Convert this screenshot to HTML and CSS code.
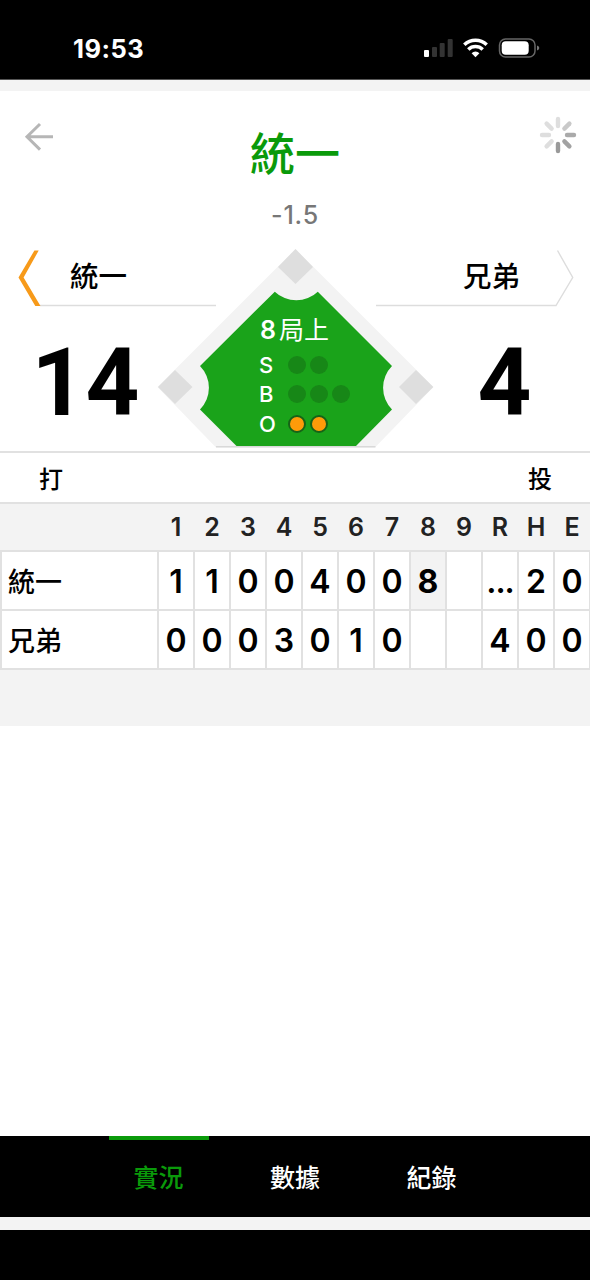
FILE: index.html
```html
<!DOCTYPE html>
<html lang="zh-Hant">
<head>
<meta charset="utf-8">
<title>統一 - 兄弟</title>
<link rel="stylesheet" href="styles.css">
</head>
<body>
<div class="app">
  <header class="status">
    <span class="time">19:53</span>
    <svg class="status-icons" width="118" height="24" viewBox="0 0 118 24">
      <rect x="1" y="14" width="5" height="7" rx="1" fill="#fff"/>
      <g fill="#333"><rect x="9" y="11" width="5" height="10" rx="1"/><rect x="16.7" y="7" width="5" height="14" rx="1"/><rect x="24.7" y="3" width="5" height="18" rx="1"/></g>
      <g fill="none" stroke="#fff" stroke-width="3.5"><path d="M41.3 8.800a16.200 16.200 0 0 1 22.400 0"/><path d="M45.300 13.500a10.300 10.300 0 0 1 14.400 0"/></g>
      <path d="M48.600 17.200a5.500 5.500 0 0 1 7.800 0L52.500 21.200z" fill="#fff"/>
      <rect x="76.500" y="3" width="35.500" height="18" rx="6" fill="none" stroke="#666" stroke-width="1.500"/>
      <rect x="78.700" y="5.200" width="27" height="13.600" rx="4" fill="#fff"/>
      <path d="M114 9.500q2.300.8 2.300 2.500T114 14.500z" fill="#777"/>
    </svg>
  </header>
  <div class="strip"></div>

  <section class="heading">
    <svg class="back" width="30" height="30" viewBox="0 0 30 30"><path d="M29 14.800H3M16 2 3 14.800 16 27.600" fill="none" stroke="#b6b6b6" stroke-width="3"/></svg>
    <div class="heading-text">
      <h1 class="title">統一</h1>
      <p class="handicap">-1.5</p>
    </div>
    <svg class="spinner" width="38" height="38" viewBox="-19 -19 38 38" fill="none" stroke-width="4.400" stroke-linecap="round">
      <path d="M0-9V-16" stroke="#dedede"/>
      <path d="M6.400-6.400 11.400-11.400" stroke="#c9c9c9"/>
      <path d="M9 0H16" stroke="#aaa"/>
      <path d="M6.400 6.400 11.400 11.400" stroke="#a2a2a2"/>
      <path d="M0 9V16" stroke="#999"/>
      <path d="M-6.400 6.400-11.400 11.400M-9 0H-16M-6.400-6.400-11.400-11.400" stroke="#dedede"/>
    </svg>
  </section>

  <section class="scoreboard">
    <div class="team">
      <div class="team-name">
        <svg class="team-edge" width="216" height="60" viewBox="0 0 216 60"><path d="M40 56.500H216" stroke="#ddd" stroke-width="1.400"/><path d="M38.700 1.500H34.400L18.500 28.500 35.300 57H40.500L23.600 28.500z" fill="#f79a1a"/></svg>
        <span class="name-home">統一</span>
      </div>
      <div class="score">14</div>
    </div>
    <div class="diamond">
      <svg class="field" width="277" height="200" viewBox="157 248 277 200">
        <path d="M295.500 249 433.500 387 375 447.500H216L157.500 387z" fill="#f3f3f3"/>
        <g fill="#dedede"><path d="m295.500 249 17.500 18-17.500 17-17.500-17zM158 387l17-17 17.500 17-17.500 17zM399 387l17-17 17.300 17-17.300 17z"/></g>
        <path d="M274.800 291.700A31 31 0 0 0 317.800 291.700L392 366A31 31 0 0 0 392 409.500L356 446H236.500L200 409.500A31 31 0 0 0 200 366z" fill="#1aa31a"/>
        <path d="M216 446.700H375.500" stroke="#d9d9d9" stroke-width="1.600"/>
      </svg>
      <div class="count">
        <div class="inning"><span class="inning-number">8</span>局上</div>
        <div class="count-row"><b>S</b><i class="dot"></i><i class="dot"></i></div>
        <div class="count-row"><b>B</b><i class="dot"></i><i class="dot"></i><i class="dot"></i></div>
        <div class="count-row"><b>O</b><i class="dot on"></i><i class="dot on"></i></div>
      </div>
    </div>
    <div class="team">
      <div class="team-name">
        <svg class="team-edge" width="215" height="60" viewBox="375 0 215 60"><path d="M376 56.500H556L572.700 28.500 557.500 1.500" fill="none" stroke="#ddd" stroke-width="1.400"/></svg>
        <span class="name-away">兄弟</span>
      </div>
      <div class="score">4</div>
    </div>
  </section>

  <section class="players"><span>打</span><span>投</span></section>

  <section class="line-score">
    <table>
      <colgroup><col class="col-team"><col class="col-run" span="12"></colgroup>
      <thead><tr><th></th><th>1</th><th>2</th><th>3</th><th>4</th><th>5</th><th>6</th><th>7</th><th>8</th><th>9</th><th>R</th><th>H</th><th>E</th></tr></thead>
      <tbody>
        <tr><td class="name">統一</td><td>1</td><td>1</td><td>0</td><td>0</td><td>4</td><td>0</td><td>0</td><td class="current">8</td><td></td><td class="more">...</td><td>2</td><td>0</td></tr>
        <tr><td class="name">兄弟</td><td>0</td><td>0</td><td>0</td><td>3</td><td>0</td><td>1</td><td>0</td><td></td><td></td><td>4</td><td>0</td><td>0</td></tr>
      </tbody>
    </table>
  </section>

  <main class="blank"></main>
  <nav class="tabs"><a class="tab active">實況</a><a class="tab">數據</a><a class="tab">紀錄</a></nav>
  <div class="strip strip-bottom"></div>
  <footer class="home-area"></footer>
</div>
</body>
</html>
```
FILE: styles.css
```css
* { box-sizing: border-box; }
body { margin: 0; font-family: Inter, "Noto Sans CJK TC", sans-serif; color: #000; background: #fff; }
.app { width: 590px; height: 1280px; display: flex; flex-direction: column; overflow: hidden; }

.status { height: 80px; flex: none; background: #000; border-bottom: 1px solid #555; color: #fff; display: flex; justify-content: space-between; padding: 36px 49px 0 73px; }
.time { font-size: 25.500px; line-height: 25px; font-weight: 700; letter-spacing: .5px; }
.strip { height: 11px; flex: none; background: #f3f3f3; }

.heading { height: 149px; flex: none; display: flex; justify-content: space-between; padding: 0 13px 0 24px; }
.back { margin-top: 31px; }
.heading-text { text-align: center; padding-right: 3px; }
.title { margin: 39px 0 0; font-size: 45px; line-height: 50px; font-weight: 500; color: #0a9a0a; }
.handicap { margin: 20px 0 0; font-size: 25px; line-height: 30px; font-weight: 500; color: #777; letter-spacing: .8px; }
.spinner { margin-top: 25px; }

.scoreboard { height: 211px; flex: none; display: grid; grid-template-columns: 216px 159px 215px; }
.team-name { height: 72px; position: relative; font-size: 28.500px; font-weight: 500; line-height: 74px; }
.team-edge { position: absolute; left: 0; top: 9px; }
.name-home { padding-left: 70px; }
.name-away { padding-left: 88px; }
.score { font-family: Roboto, sans-serif; font-size: 94px; line-height: 110px; font-weight: 700; padding-top: 16px; text-align: center; }
.team:first-child .score { padding-right: 45px; }
.team:last-child .score { padding-left: 44px; }
.diamond { position: relative; }
.field { position: absolute; left: -59px; top: 8px; }
.count { position: relative; padding: 73px 0 0 43px; color: #fff; }
.inning { font-size: 25px; line-height: 34px; font-weight: 400; height: 37px; padding-left: 1px; white-space: nowrap; }
.inning-number { font-weight: 600; margin-right: 3px; }
.count-row { height: 29.500px; display: flex; align-items: center; gap: 4px; }
.count-row b { width: 25px; font-size: 22px; font-weight: 500; line-height: 24px; }
.dot { width: 18px; height: 18px; border-radius: 50%; background: #178717; }
.dot.on { background: #ff9b09; border: 2px solid #176317; }

.players { height: 53px; flex: none; border-top: 2px solid #e1e1e1; border-bottom: 2px solid #e1e1e1; display: flex; justify-content: space-between; padding: 0 38px 0 39px; font-size: 24px; font-weight: 500; line-height: 54px; }

.line-score { height: 222px; flex: none; background: #f3f3f3; overflow: hidden; }
table { table-layout: fixed; border-collapse: collapse; width: 590px; }
.col-team { width: 157px; }
.col-run { width: 36px; }
th { height: 47px; padding: 0; font-size: 25px; line-height: 30px; font-weight: 600; color: #222; }
td { height: 59px; padding: 2px 0 0; border: 2px solid #e1e1e1; background: #fff; font-size: 32px; line-height: 36px; font-weight: 600; text-align: center; }
td.name { font-size: 27px; font-weight: 500; text-align: left; padding: 4px 0 0 6px; }
td.current { background: #f3f3f3; font-weight: 700; }
td.more { letter-spacing: -1px; }

.blank { flex: 1; background: #fff; }
.tabs { height: 81px; flex: none; background: #000; display: flex; justify-content: center; gap: 36.500px; }
.tab { width: 100px; border-top: 4px solid transparent; color: #fff; font-size: 25px; font-weight: 500; line-height: 76px; text-align: center; }
.tab.active { color: #0a9a0a; border-color: #0a9a0a; }
.strip-bottom { height: 13px; }
.home-area { height: 50px; flex: none; background: #000; }
```
